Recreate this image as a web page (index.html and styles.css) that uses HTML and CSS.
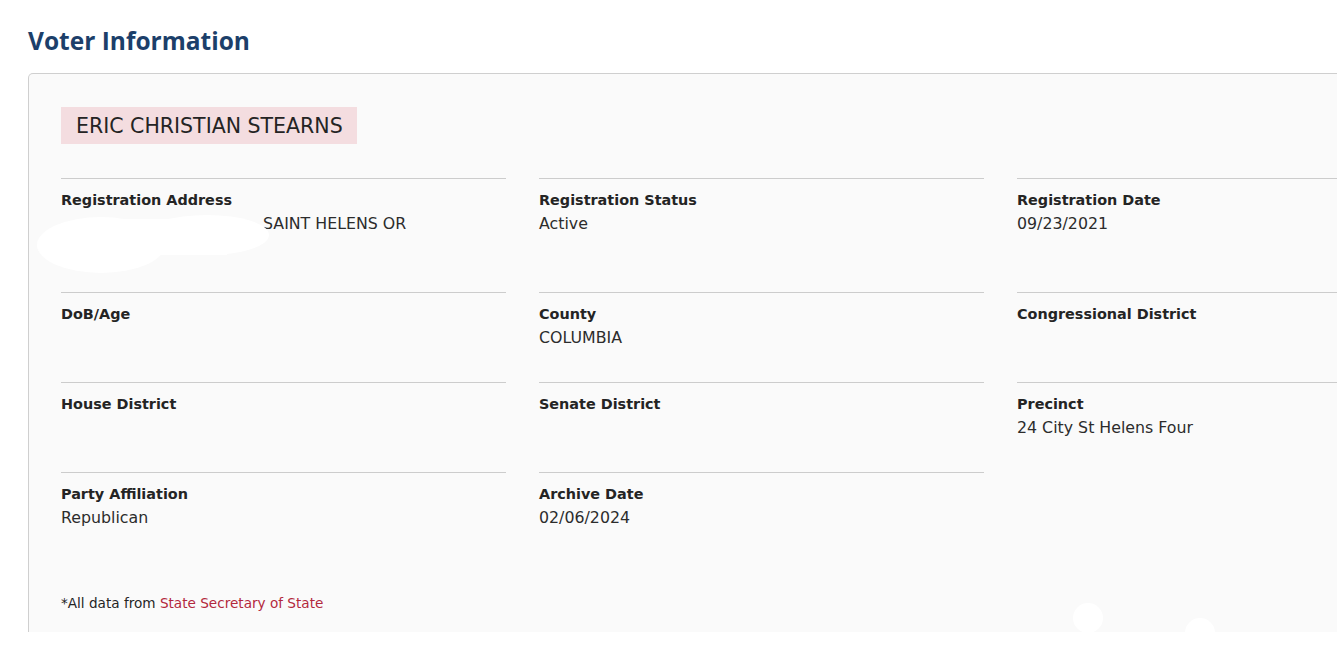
FILE: index.html
```html
<!DOCTYPE html>
<html lang="en">
<head>
<meta charset="utf-8">
<title>Voter Information</title>
<link rel="stylesheet" href="styles.css">
</head>
<body>
<main class="page">
  <h1 class="title">Voter Information</h1>
  <section class="card">
    <div class="name">ERIC CHRISTIAN STEARNS</div>
    <div class="grid">
      <div class="cell cell-address">
        <div class="label">Registration Address</div>
        <div class="value address"><span class="street"></span>SAINT HELENS OR</div>
        <svg class="redact" width="240" height="64" viewBox="0 0 240 64" aria-hidden="true">
          <ellipse cx="64" cy="32" rx="64" ry="28" fill="#ffffff"/>
          <ellipse cx="170" cy="22" rx="62" ry="20" fill="#ffffff"/>
          <rect x="40" y="6" width="150" height="36" fill="#ffffff"/>
        </svg>
      </div>
      <div class="cell">
        <div class="label">Registration Status</div>
        <div class="value">Active</div>
      </div>
      <div class="cell">
        <div class="label">Registration Date</div>
        <div class="value">09/23/2021</div>
      </div>
      <div class="cell">
        <div class="label">DoB/Age</div>
        <div class="value"></div>
      </div>
      <div class="cell">
        <div class="label">County</div>
        <div class="value">COLUMBIA</div>
      </div>
      <div class="cell">
        <div class="label">Congressional District</div>
        <div class="value"></div>
      </div>
      <div class="cell">
        <div class="label">House District</div>
        <div class="value"></div>
      </div>
      <div class="cell">
        <div class="label">Senate District</div>
        <div class="value"></div>
      </div>
      <div class="cell">
        <div class="label">Precinct</div>
        <div class="value">24 City St Helens Four</div>
      </div>
      <div class="cell">
        <div class="label">Party Affiliation</div>
        <div class="value">Republican</div>
      </div>
      <div class="cell">
        <div class="label">Archive Date</div>
        <div class="value">02/06/2024</div>
      </div>
    </div>
    <p class="source">*All data from <a href="#" class="source-link">State Secretary of State</a></p>
    <span class="dot dot-a"></span>
    <span class="dot dot-b"></span>
  </section>
</main>
</body>
</html>
```

FILE: styles.css
```css
* { box-sizing: border-box; }
html { background: #ffffff; }
body {
  margin: 0;
  overflow-x: hidden;
  font-family: "DejaVu Sans", "Open Sans", sans-serif;
  color: #242424;
  background: #ffffff;
}
.page {
  padding: 26px 0 0 28px;
}
.title {
  margin: 0 0 17px 0;
  font-family: "Open Sans", "DejaVu Sans", sans-serif;
  font-size: 24.5px;
  line-height: 30px;
  font-weight: 700;
  color: #1c3f6a;
}
.card {
  position: relative;
  width: 1480px;
  height: 559px;
  background: #fafafa;
  border: 1px solid #cfcfcf;
  border-bottom: none;
  border-radius: 5px 5px 0 0;
  padding: 33px 0 0 32px;
}
.name {
  display: block;
  width: fit-content;
  background: #f4dde0;
  padding: 7px 14px 5px 15px;
  font-size: 20.5px;
  line-height: 25px;
  color: #242424;
}
.grid {
  margin-top: 34px;
  display: grid;
  grid-template-columns: repeat(3, 445px);
  column-gap: 33px;
  row-gap: 32px;
}
.cell {
  position: relative;
  border-top: 1px solid #cccccc;
  padding-top: 9px;
}
.label {
  font-size: 14.4px;
  line-height: 24px;
  font-weight: 700;
  color: #242424;
}
.value {
  font-size: 15.8px;
  line-height: 24px;
  min-height: 24px;
  color: #2c2c2c;
}
.address {
  min-height: 48px;
}
.street {
  display: inline-block;
  width: 202px;
}
.redact {
  position: absolute;
  left: -24px;
  top: 34px;
}
.source {
  margin: 64px 0 0 0;
  font-size: 13.6px;
  line-height: 18px;
  color: #242424;
}
.source-link {
  color: #b3283d;
  text-decoration: none;
}
.dot {
  position: absolute;
  width: 30px;
  height: 30px;
  border-radius: 50%;
  background: #ffffff;
}
.dot-a { left: 1044px; top: 529px; }
.dot-b { left: 1156px; top: 544px; }
```
